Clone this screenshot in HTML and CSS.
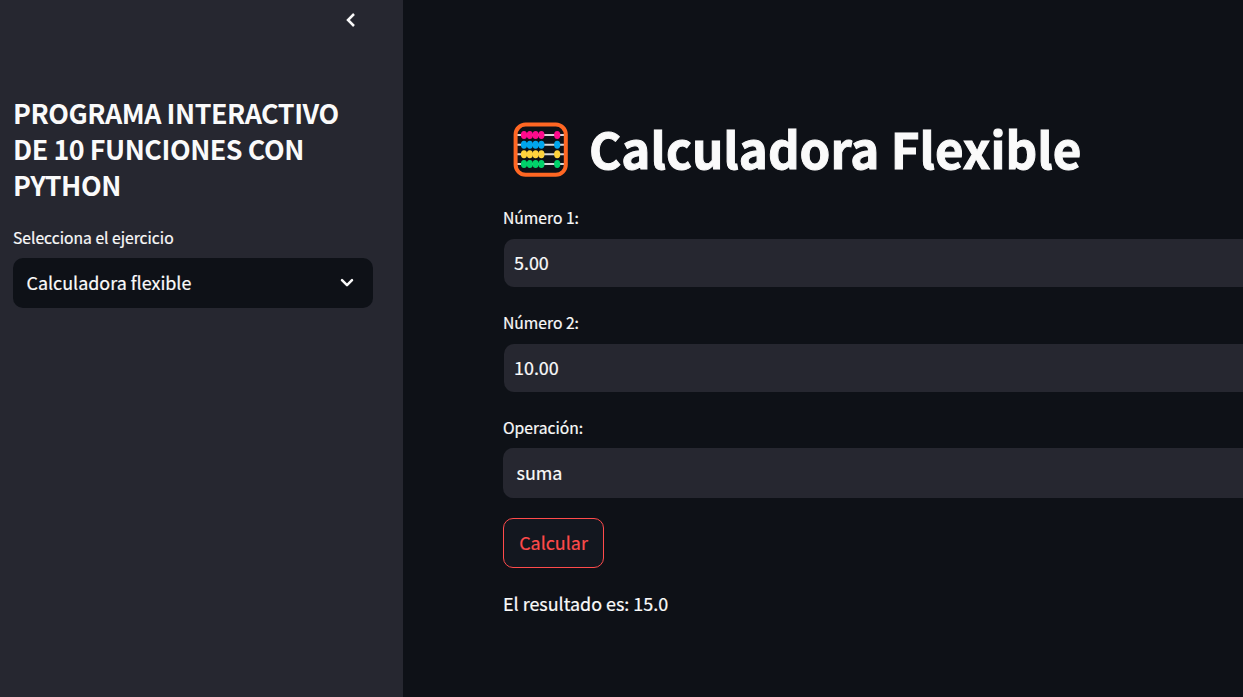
FILE: index.html
```html
<!DOCTYPE html>
<html lang="es">
<head>
<meta charset="utf-8">
<title>Calculadora Flexible</title>
<link rel="stylesheet" href="styles.css">
</head>
<body>
<div class="app">
  <aside class="sidebar">
    <div class="sidebar-header">
      <svg width="12" height="16" viewBox="0 0 12 16" fill="none" stroke="#fafafa" stroke-width="2.5"><path d="M10 2 4 8l6 6"/></svg>
    </div>
    <h2 class="sidebar-title"><span>PROGRAMA INTERACTIVO</span><br><span>DE 10 FUNCIONES CON</span><br><span>PYTHON</span></h2>
    <div class="label">Selecciona el ejercicio</div>
    <div class="select sidebar-select">
      <span>Calculadora flexible</span>
      <svg class="chevron" width="14" height="10" viewBox="0 0 14 10" fill="none" stroke="#fafafa" stroke-width="2.5" stroke-linecap="round" stroke-linejoin="round"><path d="M2 2.2 7 7.2l5-5"/></svg>
    </div>
  </aside>
  <main class="main">
    <h1 class="title">
      <svg class="abacus" width="55" height="55" viewBox="0 0 55 55">
        <path d="M4 13h47M4 22.7h47M4 32.3h47M4 42h47" stroke="#d8d6da" stroke-width="2"/>
        <rect x="2.6" y="2.6" width="50.2" height="50.2" rx="10" fill="none" stroke="#ff6723" stroke-width="4"/>
        <g fill="#ff0a8c"><ellipse cx="11" cy="13" rx="3.1" ry="4"/><ellipse cx="16.8" cy="13" rx="3.1" ry="4"/><ellipse cx="22.6" cy="13" rx="3.1" ry="4"/><ellipse cx="28.4" cy="13" rx="3.1" ry="4"/><ellipse cx="44.2" cy="13" rx="3.1" ry="4"/></g>
        <g fill="#00a6ed"><ellipse cx="11" cy="22.7" rx="3.1" ry="4"/><ellipse cx="16.8" cy="22.7" rx="3.1" ry="4"/><ellipse cx="22.6" cy="22.7" rx="3.1" ry="4"/><ellipse cx="28.4" cy="22.7" rx="3.1" ry="4"/><ellipse cx="44.2" cy="22.7" rx="3.1" ry="4"/></g>
        <g fill="#ffd33d"><ellipse cx="11" cy="32.3" rx="3.1" ry="4"/><ellipse cx="16.8" cy="32.3" rx="3.1" ry="4"/><ellipse cx="22.6" cy="32.3" rx="3.1" ry="4"/><ellipse cx="28.4" cy="32.3" rx="3.1" ry="4"/><ellipse cx="44.2" cy="32.3" rx="3.1" ry="4"/></g>
        <g fill="#00d26a"><ellipse cx="11" cy="42" rx="3.1" ry="4"/><ellipse cx="16.8" cy="42" rx="3.1" ry="4"/><ellipse cx="22.6" cy="42" rx="3.1" ry="4"/><ellipse cx="28.4" cy="42" rx="3.1" ry="4"/><ellipse cx="44.2" cy="42" rx="3.1" ry="4"/></g>
      </svg>
      <span>Calculadora Flexible</span>
    </h1>
    <div class="field">
      <div class="label">Número 1:</div>
      <div class="input">5.00</div>
    </div>
    <div class="field">
      <div class="label">Número 2:</div>
      <div class="input">10.00</div>
    </div>
    <div class="field field-select">
      <div class="label">Operación:</div>
      <div class="select">suma</div>
    </div>
    <button class="button">Calcular</button>
    <p class="result">El resultado es: 15.0</p>
  </main>
</div>
</body>
</html>
```
FILE: styles.css
```css
* { box-sizing: border-box; }

body {
  margin: 0;
  overflow: hidden;
  background: #0e1117;
  color: #fafafa;
  font: 17.92px "Noto Sans CJK SC", "Noto Sans", sans-serif;
  -webkit-text-stroke: 0.2px;
}

.app { display: flex; height: 697px; }

.sidebar {
  flex: none;
  width: 403px;
  padding: 0 30px 0 13px;
  background: #262730;
}

.sidebar-header {
  display: flex;
  justify-content: flex-end;
  align-items: center;
  height: 40px;
  padding-right: 17px;
}

.sidebar-title {
  margin: 55px 0 24px;
  font-size: 26.86px;
  font-weight: 700;
  line-height: 36px;
  letter-spacing: -0.46px;
  white-space: nowrap;
  -webkit-text-stroke: 0;
}

.label {
  height: 22px;
  margin-bottom: 9px;
  font-size: 15.67px;
  line-height: 22px;
}

.select,
.input {
  display: flex;
  align-items: center;
  justify-content: space-between;
  background: #262730;
}

.select {
  height: 50px;
  padding: 0 19px 2px 13.5px;
  border-radius: 10px;
}

.sidebar-select { background: #0e1117; }

.chevron { margin-top: 2px; }

.input {
  height: 48px;
  padding: 0 10px 2px;
  margin-left: 1px;
  border-radius: 10px 0 0 10px;
}

.main {
  flex: 1;
  min-width: 0;
  padding: 112px 0 0 100px;
}

.main .select { border-radius: 10px 0 0 10px; }

.title {
  display: flex;
  gap: 21px;
  height: 72px;
  margin: 0 0 23px;
  padding-left: 10px;
  font-size: 49.25px;
  font-weight: 700;
  line-height: 72px;
  white-space: nowrap;
  -webkit-text-stroke: 1px;
}

.abacus { flex: none; margin-top: 10px; }

.field { height: 80px; margin-bottom: 25px; }

.field .label { margin-bottom: 10px; padding-bottom: 0; }

.field .input { margin-top: 10px; }

.field-select { height: 81px; margin-bottom: 20px; }

.field-select .label { margin-bottom: 9px; }

.button {
  display: block;
  width: 101px;
  height: 50px;
  padding: 0 0 2px;
  border: 1px solid #ff4b4b;
  border-radius: 10px;
  background: #13171f;
  color: #ff4b4b;
  font: inherit;
}

.result { margin: 20px 0 0; line-height: 30px; }
```
